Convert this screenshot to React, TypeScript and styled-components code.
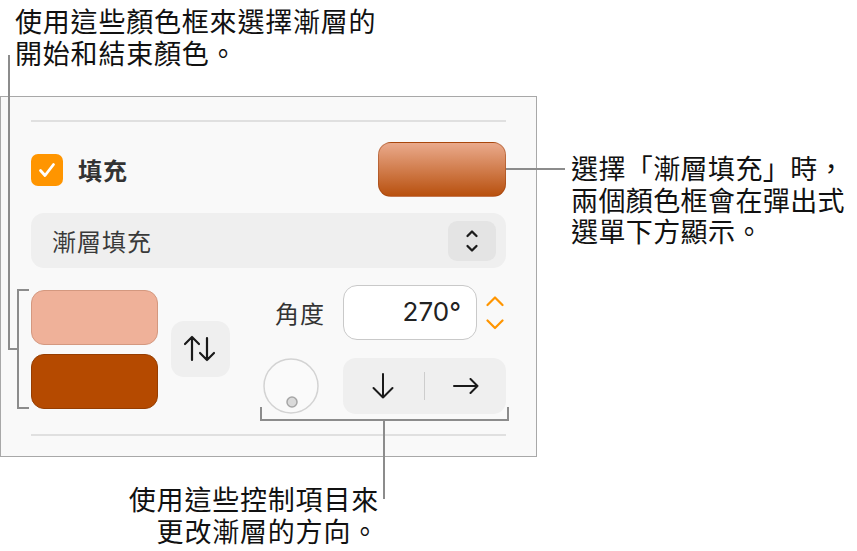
import React from "react"
import styled, { createGlobalStyle } from "styled-components"

const GlobalStyle = createGlobalStyle`
  html, body { margin: 0; padding: 0; background: #fff; }
  body { font-family: "Noto Sans CJK TC", "Noto Sans", sans-serif; }
`

const LEAD = "#8c8c8c"

export default function App() {
  return (
    <>
      <GlobalStyle />
      <S.Page>
        <S.TopNote>{"使用這些顏色框來選擇漸層的\n開始和結束顏色。"}</S.TopNote>

        <S.Middle>
          <S.Panel>
            <S.Separator $top={23} />

            <S.FillRow>
              <S.FillToggle>
                <S.Check>
                  <svg width="32" height="32" viewBox="0 0 32 32">
                    <path d="M9.5 16.5 L14 21.5 L22.5 10.5" fill="none" stroke="#fff" strokeWidth="2.8" strokeLinecap="round" strokeLinejoin="round" />
                  </svg>
                </S.Check>
                <S.FillLabel>填充</S.FillLabel>
              </S.FillToggle>
              <S.Swatch />
            </S.FillRow>

            <S.Popup>
              <span>漸層填充</span>
              <S.PopupStepper>
                <svg width="48" height="40" viewBox="0 0 48 40">
                  <path d="M19.5 15 L24 10.5 L28.5 15 M19.5 25 L24 29.5 L28.5 25" fill="none" stroke="#1c1c1c" strokeWidth="2.3" strokeLinecap="round" strokeLinejoin="round" />
                </svg>
              </S.PopupStepper>
            </S.Popup>

            <S.Lower>
              <S.Wells>
                <S.Well $fill="#efb199" $edge="#d4987f" />
                <S.Well $fill="#b54a00" $edge="#963d00" />
              </S.Wells>
              <S.SwapButton>
                <svg width="59" height="56" viewBox="0 0 59 56">
                  <path d="M21 16 V39 M14 23 L21 16 L28 23 M36 17 V39 M29 32 L36 39 L43 32" fill="none" stroke="#1a1a1a" strokeWidth="2.2" strokeLinecap="round" strokeLinejoin="round" />
                </svg>
              </S.SwapButton>

              <S.Controls>
                <S.ControlRow>
                  <S.AngleLabel>角度</S.AngleLabel>
                  <S.AngleField>270°</S.AngleField>
                  <S.Stepper>
                    <svg width="18" height="34" viewBox="0 0 18 34">
                      <path d="M1.5 9 L9 1.5 L16.5 9 M1.5 24.5 L9 32 L16.5 24.5" fill="none" stroke="#ff9500" strokeWidth="2.2" strokeLinecap="round" strokeLinejoin="round" />
                    </svg>
                  </S.Stepper>
                </S.ControlRow>
                <S.ControlRow>
                  <svg width="56" height="56" viewBox="0 0 56 56">
                    <circle cx="28" cy="28" r="27" fill="#fafafa" stroke="#d3d3d3" strokeWidth="1.5" />
                    <circle cx="29" cy="44" r="5" fill="#dadada" stroke="#a6a6a6" strokeWidth="1.5" />
                  </svg>
                  <S.Segment>
                    <S.SegButton>
                      <svg width="22" height="26" viewBox="0 0 22 26">
                        <path d="M11 1 V24.5 M1.5 15 L11 24.5 L20.5 15" fill="none" stroke="#1a1a1a" strokeWidth="2" strokeLinecap="round" strokeLinejoin="round" />
                      </svg>
                    </S.SegButton>
                    <S.SegDivider />
                    <S.SegButton>
                      <svg width="26" height="16" viewBox="0 0 26 16">
                        <path d="M1 8 H24.5 M17.5 1 L24.5 8 L17.5 15" fill="none" stroke="#1a1a1a" strokeWidth="2" strokeLinecap="round" strokeLinejoin="round" />
                      </svg>
                    </S.SegButton>
                  </S.Segment>
                </S.ControlRow>
              </S.Controls>
            </S.Lower>

            <S.Separator $top={21} />
          </S.Panel>

          <S.RightNote>{"選擇「漸層填充」時，\n兩個顏色框會在彈出式\n選單下方顯示。"}</S.RightNote>
        </S.Middle>

        <S.BottomNote>{"使用這些控制項目來\n更改漸層的方向。"}</S.BottomNote>

        {/* leader lines of the callouts */}
        <S.Lead $x={8} $y={55} $w={2} $h={295} />
        <S.Lead $x={8} $y={348} $w={11} $h={2} />
        <S.Lead $x={17} $y={289} $w={2} $h={120} />
        <S.Lead $x={17} $y={289} $w={12} $h={2} />
        <S.Lead $x={17} $y={407} $w={12} $h={2} />

        <S.Lead $x={506} $y={168} $w={59} $h={2} />

        <S.Lead $x={260} $y={419} $w={249} $h={2} />
        <S.Lead $x={260} $y={407} $w={2} $h={14} />
        <S.Lead $x={507} $y={407} $w={2} $h={14} />
        <S.Lead $x={383} $y={419} $w={2} $h={80} />
      </S.Page>
    </>
  )
}

const S = {
  Page: styled.div`
    position: relative;
    width: 857px;
    height: 551px;
    overflow: hidden;
  `,
  TopNote: styled.div`
    box-sizing: border-box;
    height: 96px;
    padding: 5px 0 0 15px;
    font-size: 27px;
    line-height: 32px;
    letter-spacing: 0.8px;
    color: #111;
    white-space: pre-line;
  `,
  RightNote: styled.div`
    margin: 56px 0 0 34px;
    font-size: 27px;
    line-height: 31.5px;
    letter-spacing: 0.4px;
    color: #111;
    white-space: pre-line;
  `,
  BottomNote: styled.div`
    width: 379px;
    margin-top: 26px;
    text-align: right;
    font-size: 27px;
    line-height: 32px;
    letter-spacing: 0.8px;
    color: #111;
    white-space: pre-line;
  `,
  Middle: styled.div`
    display: flex;
    align-items: flex-start;
  `,
  Panel: styled.div`
    box-sizing: border-box;
    width: 537px;
    height: 361px;
    padding: 0 30px;
    display: flex;
    flex-direction: column;
    border: 1px solid #a8a8a8;
    background: #f9f9f9;
  `,
  Separator: styled.div<{ $top: number }>`
    margin-top: ${(p) => p.$top}px;
    height: 2px;
    background: #e0e0e0;
  `,
  FillRow: styled.div`
    margin-top: 20px;
    height: 55px;
    display: flex;
    align-items: center;
    justify-content: space-between;
  `,
  FillToggle: styled.div`
    display: flex;
    align-items: center;
  `,
  Check: styled.div`
    width: 32px;
    height: 32px;
    border-radius: 7px;
    background: #ff9500;
    display: flex;
  `,
  FillLabel: styled.span`
    margin-left: 15px;
    font-size: 24px;
    letter-spacing: 1px;
    font-weight: 700;
    color: #333;
  `,
  Swatch: styled.div`
    box-sizing: border-box;
    width: 128px;
    height: 55px;
    border-radius: 13px;
    border: 1px solid rgba(150, 60, 10, 0.45);
    background: linear-gradient(#eaaa8c, #b8500e);
  `,
  Popup: styled.div`
    margin-top: 16px;
    height: 55px;
    padding: 0 10px 0 21px;
    border-radius: 13px;
    background: #efefef;
    display: flex;
    align-items: center;
    justify-content: space-between;
    font-size: 24px;
    letter-spacing: 1px;
    color: #3a3a3a;
  `,
  PopupStepper: styled.div`
    width: 48px;
    height: 40px;
    border-radius: 9px;
    background: #e4e4e4;
    display: flex;
  `,
  Lower: styled.div`
    margin-top: 17px;
    height: 128px;
    display: flex;
    align-items: center;
  `,
  Wells: styled.div`
    display: flex;
    flex-direction: column;
    gap: 9px;
  `,
  Well: styled.div<{ $fill: string; $edge: string }>`
    box-sizing: border-box;
    width: 127px;
    height: 55px;
    border-radius: 13px;
    background: ${(p) => p.$fill};
    border: 1.5px solid ${(p) => p.$edge};
  `,
  SwapButton: styled.div`
    margin-left: 13px;
    width: 59px;
    height: 56px;
    border-radius: 13px;
    background: #efefef;
    display: flex;
  `,
  Controls: styled.div`
    margin-left: 33px;
    display: flex;
    flex-direction: column;
    gap: 17px;
  `,
  ControlRow: styled.div`
    display: flex;
    align-items: center;
    height: 56px;
  `,
  AngleLabel: styled.span`
    box-sizing: border-box;
    width: 80px;
    padding-left: 12px;
    font-size: 24px;
    letter-spacing: 1px;
    color: #333;
  `,
  AngleField: styled.div`
    box-sizing: border-box;
    width: 134px;
    height: 55px;
    padding-right: 15px;
    border: 1.5px solid #c9c9c9;
    border-radius: 14px;
    background: #fff;
    text-align: right;
    font-family: Inter, "Noto Sans", sans-serif;
    font-size: 26px;
    line-height: 52px;
    color: #222;
  `,
  Stepper: styled.div`
    margin-left: 9px;
    display: flex;
  `,
  Segment: styled.div`
    margin-left: 24px;
    width: 163px;
    height: 56px;
    border-radius: 13px;
    background: #efefef;
    display: flex;
    align-items: center;
  `,
  SegButton: styled.div`
    flex: 1;
    display: flex;
    align-items: center;
    justify-content: center;
  `,
  SegDivider: styled.div`
    width: 1.5px;
    height: 28px;
    background: #cdcdcd;
  `,
  Lead: styled.div<{ $x: number; $y: number; $w: number; $h: number }>`
    position: absolute;
    left: ${(p) => p.$x}px;
    top: ${(p) => p.$y}px;
    width: ${(p) => p.$w}px;
    height: ${(p) => p.$h}px;
    background: ${LEAD};
  `,
}
